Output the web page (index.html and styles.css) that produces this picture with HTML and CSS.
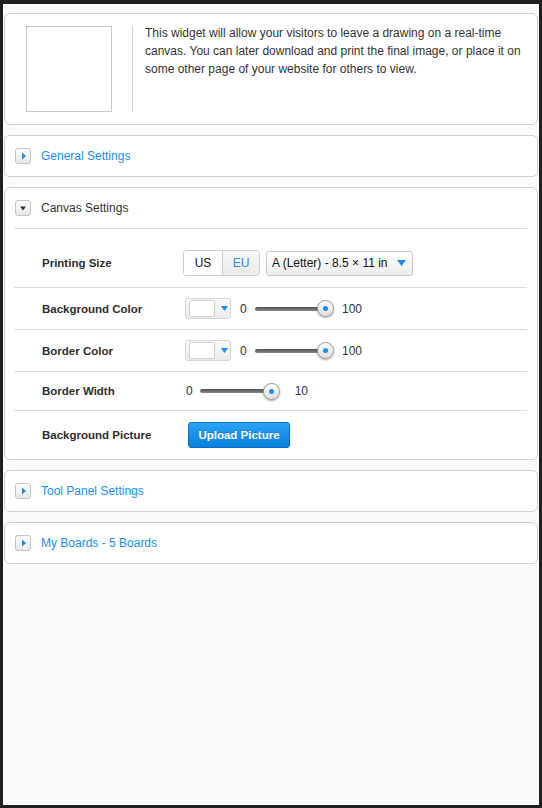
FILE: index.html
```html
<!DOCTYPE html>
<html>
<head>
<meta charset="utf-8">
<link rel="stylesheet" href="styles.css">
</head>
<body>
<div class="frame">
  <section class="panel intro">
    <div class="preview"></div>
    <div class="vsep"></div>
    <p class="desc">This widget will allow your visitors to leave a drawing on a real-time canvas. You can later download and print the final image, or place it on some other page of your website for others to view.</p>
  </section>

  <section class="panel">
    <div class="head">
      <span class="tog"><svg width="14" height="14" viewBox="0 0 14 14"><polygon points="6,3.5 10,7 6,10.5" fill="#1a8cf0"/></svg></span>
      <span class="title link">General Settings</span>
    </div>
  </section>

  <section class="panel">
    <div class="head">
      <span class="tog"><svg width="14" height="14" viewBox="0 0 14 14"><polygon points="4,5.5 10,5.5 7,9.5" fill="#333"/></svg></span>
      <span class="title">Canvas Settings</span>
    </div>
    <div class="hsep"></div>
    <div class="rows">
      <div class="row tall">
        <span class="label">Printing Size</span>
        <div class="seg"><span class="seg-on">US</span><span class="seg-off">EU</span></div>
        <div class="select"><span>A (Letter) - 8.5 × 11 in</span><svg width="9" height="6" viewBox="0 0 9 6"><polygon points="0,0 9,0 4.5,6" fill="#1a8cf0"/></svg></div>
      </div>
      <div class="row">
        <span class="label">Background Color</span>
        <div class="picker"><span class="swatch"></span><svg width="7" height="5" viewBox="0 0 7 5"><polygon points="0,0 7,0 3.5,5" fill="#1a8cf0"/></svg></div>
        <div class="slider"><span class="min">0</span><span class="track"></span><span class="thumb"><i></i></span><span class="max">100</span></div>
      </div>
      <div class="row">
        <span class="label">Border Color</span>
        <div class="picker"><span class="swatch"></span><svg width="7" height="5" viewBox="0 0 7 5"><polygon points="0,0 7,0 3.5,5" fill="#1a8cf0"/></svg></div>
        <div class="slider"><span class="min">0</span><span class="track"></span><span class="thumb"><i></i></span><span class="max">100</span></div>
      </div>
      <div class="row short">
        <span class="label">Border Width</span>
        <div class="slider bw"><span class="min">0</span><span class="track wide"></span><span class="thumb"><i></i></span><span class="max">10</span></div>
      </div>
      <div class="row tall last">
        <span class="label">Background Picture</span>
        <button class="upload">Upload Picture</button>
      </div>
    </div>
  </section>

  <section class="panel">
    <div class="head">
      <span class="tog"><svg width="14" height="14" viewBox="0 0 14 14"><polygon points="6,3.5 10,7 6,10.5" fill="#1a8cf0"/></svg></span>
      <span class="title link">Tool Panel Settings</span>
    </div>
  </section>

  <section class="panel">
    <div class="head">
      <span class="tog"><svg width="14" height="14" viewBox="0 0 14 14"><polygon points="6,3.5 10,7 6,10.5" fill="#1a8cf0"/></svg></span>
      <span class="title link">My Boards - 5 Boards</span>
    </div>
  </section>
</div>
</body>
</html>
```

FILE: styles.css
```css
html, body {
  margin: 0;
  padding: 0;
  background: #1f1f1f;
}
body {
  font-family: "Liberation Sans", Arial, Helvetica, sans-serif;
  font-size: 12px;
  color: #333;
}
.frame {
  box-sizing: border-box;
  height: 808px;
  border-style: solid;
  border-color: #1f1f1f;
  border-width: 4px 3px 3px 3px;
  background: #fafafa;
  padding: 9px 1px 0 1px;
}
.panel {
  background: #fff;
  border: 1px solid #cfcfcf;
  border-radius: 6px;
  margin-bottom: 10px;
}
.intro {
  display: flex;
  align-items: flex-start;
  padding: 12px 14px 12px 21px;
}
.preview {
  flex: none;
  box-sizing: border-box;
  width: 86px;
  height: 86px;
  border: 1px solid #c8c8c8;
}
.vsep {
  flex: none;
  width: 1px;
  height: 86px;
  background: #cfcfcf;
  margin-left: 20px;
}
.desc {
  margin: -2px 0 0 12px;
  line-height: 18px;
  color: #333;
}
.head {
  height: 40px;
  display: flex;
  align-items: center;
  padding-left: 10px;
}
.tog {
  box-sizing: border-box;
  width: 16px;
  height: 16px;
  border: 1px solid #c4c4c4;
  border-radius: 3px;
  background: linear-gradient(#fefefe, #e8e8e8);
  display: flex;
  align-items: center;
  justify-content: center;
  margin-right: 10px;
}
.tog svg { display: block; }
.title {
  font-size: 12px;
  color: #333;
}
.title.link { color: #1e8cf2; }
.hsep {
  height: 1px;
  background: #dcdcdc;
  margin: 0 10px 0 9px;
}
.rows {
  padding: 10px 10px 0 9px;
}
.row {
  display: flex;
  align-items: center;
  height: 41px;
  border-bottom: 1px solid #dcdcdc;
  padding-left: 28px;
}
.row.tall { height: 48px; }
.row.short { height: 38px; }
.row.last { border-bottom: none; }
.label {
  flex: none;
  width: 141px;
  font-weight: bold;
  font-size: 11.5px;
  color: #2e2e2e;
}
.seg {
  display: flex;
  box-sizing: border-box;
  height: 26px;
  border: 1px solid #ccc;
  border-radius: 4px;
  overflow: hidden;
}
.seg span {
  display: flex;
  align-items: center;
  justify-content: center;
  font-size: 12px;
}
.seg-on {
  width: 38px;
  background: #fff;
  color: #111;
}
.seg-off {
  width: 36px;
  border-left: 1px solid #ccc;
  background: linear-gradient(#f7f7f7, #ebebeb);
  color: #1e8cf2;
}
.select {
  box-sizing: border-box;
  margin-left: 6px;
  width: 147px;
  height: 25px;
  border: 1px solid #c8c8c8;
  border-radius: 3px;
  background: linear-gradient(#ffffff, #ececec);
  display: flex;
  align-items: center;
  justify-content: space-between;
  padding: 0 6px 0 5px;
  color: #111;
}
.picker {
  box-sizing: border-box;
  margin-left: 2px;
  width: 46px;
  height: 21px;
  border: 1px solid #d6d6d6;
  border-radius: 3px;
  background: linear-gradient(#fafafa, #ebebeb);
  display: flex;
  align-items: center;
  padding-left: 3px;
}
.swatch {
  box-sizing: border-box;
  width: 26px;
  height: 17px;
  background: #fff;
  border: 1px solid #d0d0d0;
  border-radius: 2px;
  margin-right: 6px;
}
.slider {
  display: flex;
  align-items: center;
  margin-left: 9px;
}
.slider.bw { margin-left: 3px; }
.min {
  width: 7px;
  margin-right: 8px;
}
.bw .min { margin-right: 7px; }
.track {
  width: 70px;
  height: 4px;
  border-radius: 2px;
  background: linear-gradient(#4f4f4f, #8a8a8a);
}
.track.wide { width: 71px; }
.thumb {
  box-sizing: border-box;
  width: 17px;
  height: 17px;
  margin-left: -8px;
  border-radius: 50%;
  border: 1px solid #9a9a9a;
  background: linear-gradient(#ffffff, #dedede);
  box-shadow: 0 1px 2px rgba(0,0,0,0.35);
  display: flex;
  align-items: center;
  justify-content: center;
}
.thumb i {
  width: 5px;
  height: 5px;
  border-radius: 50%;
  background: #1a8cf0;
}
.max {
  width: 28px;
  text-align: right;
}
.upload {
  margin-left: 5px;
  box-sizing: border-box;
  width: 102px;
  height: 26px;
  border: 1px solid #0c6cc4;
  border-radius: 3px;
  background: linear-gradient(#2aa2f5, #0b80de);
  color: #fff;
  font-family: "Liberation Sans", Arial, Helvetica, sans-serif;
  font-weight: bold;
  font-size: 11.5px;
  padding: 0;
  text-shadow: 0 -1px 0 rgba(0,0,0,0.15);
}
```
